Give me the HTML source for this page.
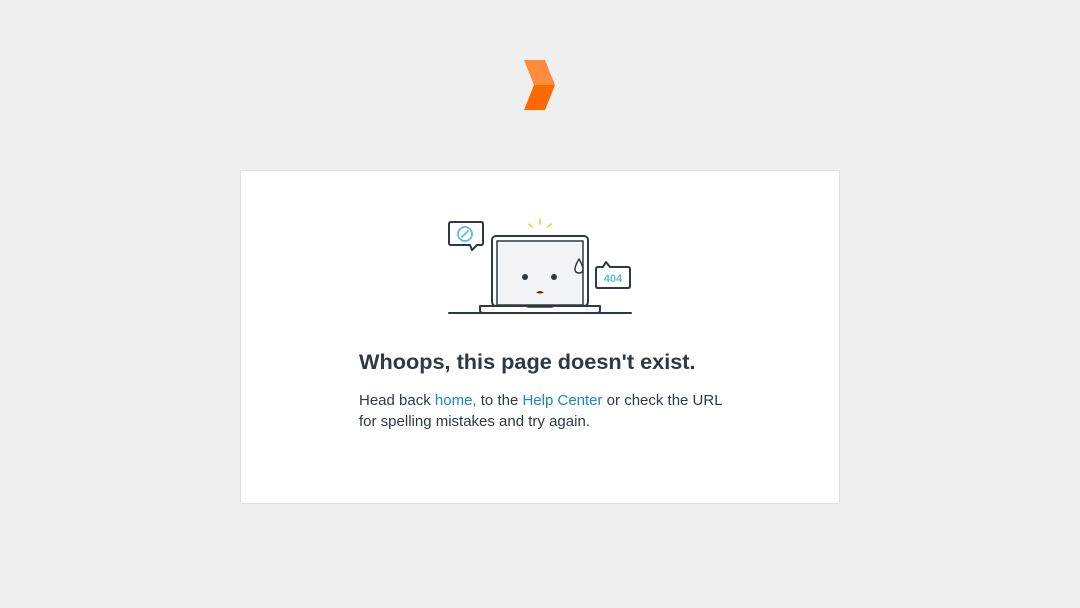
<!DOCTYPE html>
<html><head><meta charset="utf-8"><style>
html,body{margin:0;padding:0;background:#efefef;width:1080px;height:608px;overflow:hidden;font-family:"Liberation Sans",Arial,sans-serif}
.card{position:absolute;left:240px;top:170px;width:598px;height:332px;background:#fff;border:1px solid #e0e0e0}
h1{position:absolute;left:359px;top:349px;margin:0;font-size:21.7px;font-weight:bold;color:#2f3941;white-space:nowrap}
p{position:absolute;left:359px;top:390px;margin:0;font-size:15px;line-height:21px;color:#2f3941;width:372px}
a{color:#1a87c5;text-decoration:none}
</style></head><body>
<svg style="position:absolute;left:0;top:0" width="1080" height="608">
<polygon points="524,60 545,60 555,85 534,85" fill="#ff8b3d"/>
<polygon points="534,85 555,85 545,110 524,110" fill="#ff6a00"/>
</svg>
<div class="card"></div>
<svg style="position:absolute;left:0;top:0" width="1080" height="608" fill="none" stroke="#2f3941" stroke-width="2" stroke-linejoin="round" stroke-linecap="round">
<line x1="449" y1="313" x2="631" y2="313"/>
<rect x="492" y="236" width="96" height="70" rx="4" fill="#fff"/>
<rect x="497" y="241" width="86" height="64" fill="#f3f4f6" stroke-width="1.5"/>
<path d="M480 306 H600 V310 Q600 313 597 313 H483 Q480 313 480 310 Z" fill="#fff"/>
<line x1="528" y1="307" x2="552" y2="307" stroke-width="1.5"/>
<circle cx="525" cy="277" r="3" fill="#2f3941" stroke="none"/>
<circle cx="554" cy="277" r="3" fill="#2f3941" stroke="none"/>
<path d="M536 293 Q540 289 544 293 Z" fill="#2f3941" stroke="none"/>
<path d="M537 293 H543 Q540 296 537 293Z" fill="#f79a3e" stroke="none"/>
<path d="M579 259 Q575 266 575 269 Q575 273 579 273 Q583 273 583 269 Q583 266 579 259Z" fill="#fff" stroke-width="1.5"/>
<g stroke="#f5c518" stroke-width="1.5"><line x1="540" y1="219" x2="540" y2="224"/><line x1="529" y1="224" x2="532" y2="227"/><line x1="551" y1="224" x2="548" y2="227"/></g>
<path d="M451 222 H481 Q483 222 483 224 V243 Q483 245 481 245 H477 L472 250 L470 245 H451 Q449 245 449 243 V224 Q449 222 451 222Z" fill="#fff"/>
<circle cx="465" cy="234" r="7" stroke="#5ebfcc" stroke-width="1.8"/>
<line x1="462" y1="237" x2="468" y2="231" stroke="#5ebfcc" stroke-width="1.8"/>
<path d="M598 267 H603 L606 262 L610 267 H628 Q630 267 630 269 V286 Q630 288 628 288 H598 Q596 288 596 286 V269 Q596 267 598 267Z" fill="#fff"/>
<text x="613" y="282" text-anchor="middle" font-family="Liberation Sans" font-size="11" font-weight="bold" fill="#5ebfcc" stroke="none">404</text>
</svg>
<h1>Whoops, this page doesn't exist.</h1>
<p>Head back <a>home,</a> to the <a>Help Center</a> or check the URL for spelling mistakes and try again.</p>
</body></html>
